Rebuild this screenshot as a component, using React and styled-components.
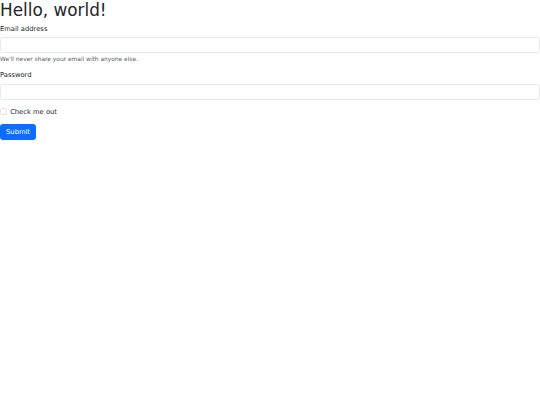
import React from "react";
import styled, { createGlobalStyle } from "styled-components";

// the page is a bootstrap form seen at 1280px and shrunk to 540px,
// so 1rem here is 16px * 540 / 1280 and a 1px line shrinks to ~0.42px
const GlobalStyle = createGlobalStyle`
  html {
    font-size: 6.75px;
  }
  body {
    margin: 0;
    font-family: "DejaVu Sans", "Noto Sans", sans-serif;
    font-size: 1rem;
    line-height: 1.5;
    color: #212529;
    background: #fff;
  }
  * {
    box-sizing: border-box;
  }
`;

const Title = styled.h1`
  margin: 0 0 0.5rem;
  font-size: 2.5rem;
  font-weight: 500;
  line-height: 1.2;
`;

const Form = styled.form`
  display: flex;
  flex-direction: column;
  align-items: flex-start;
`;

const Field = styled.div`
  width: 100%;
  margin-bottom: 1rem;
`;

const Label = styled.label`
  display: block;
  height: 1.5rem;
  margin-bottom: 0.5rem;
`;

const Input = styled.input`
  display: block;
  width: 100%;
  height: 2.375rem;
  margin: 0;
  padding: 0 0.75rem;
  font: inherit;
  line-height: 1.5;
  color: #212529;
  background: #fff;
  border: 1px solid #e6e9ec;
  border-radius: 0.375rem;
  outline: none;
`;

const Help = styled.div`
  margin-top: 0.25rem;
  height: 1.3125rem;
  font-size: 0.875em;
  color: #595c5f;
`;

const CheckRow = styled.label`
  display: flex;
  align-items: flex-start;
  height: 1.5rem;
  margin-bottom: 1rem;
  cursor: pointer;
`;

const Box = styled.input`
  appearance: none;
  flex: none;
  font-size: inherit;
  width: 1em;
  height: 1em;
  margin: 0.25em 0.5em 0 0;
  background: #fff;
  border: 1px solid #e2e3e4;
  border-radius: 0.25em;
`;

const Button = styled.button`
  display: inline-flex;
  align-items: center;
  height: 2.375rem;
  margin: 0;
  padding: 0 0.75rem;
  font: inherit;
  line-height: 1.5;
  color: #fff;
  background: #0d6efd;
  border: 1px solid #0d6efd;
  border-radius: 0.375rem;
  cursor: pointer;
`;

const App = () => {
  return (
    <>
      <GlobalStyle />
      <Title>Hello, world!</Title>
      <Form onSubmit={(e) => e.preventDefault()}>
        <Field>
          <Label htmlFor="email">Email address</Label>
          <Input id="email" type="email" />
          <Help>We'll never share your email with anyone else.</Help>
        </Field>
        <Field>
          <Label htmlFor="password">Password</Label>
          <Input id="password" type="password" />
        </Field>
        <CheckRow>
          <Box type="checkbox" />
          Check me out
        </CheckRow>
        <Button type="submit">Submit</Button>
      </Form>
    </>
  );
};

export default App;
